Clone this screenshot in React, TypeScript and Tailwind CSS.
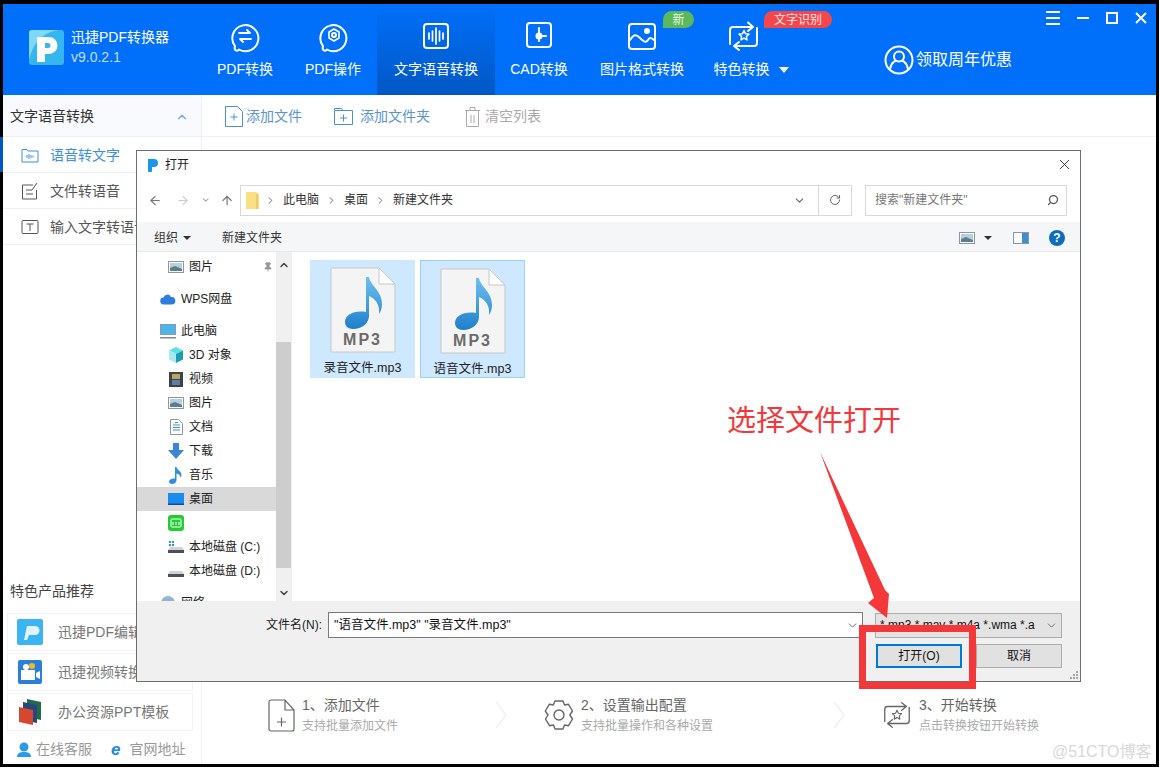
import type { ReactNode } from "react";
import { ChevronDown, ChevronRight, ChevronUp, ArrowLeft, ArrowRight, ArrowUp, RotateCw, Search, X, Pin } from "lucide-react";

const FONT = "font-['Liberation_Sans','Noto_Sans_CJK_SC',sans-serif]";

function Stroke({ size = 34, children, className = "" }: { size?: number; children: ReactNode; className?: string }) {
  return (
    <svg width={size} height={size} viewBox="0 0 34 34" fill="none" stroke="currentColor" strokeWidth="2" strokeLinecap="round" strokeLinejoin="round" className={className}>
      {children}
    </svg>
  );
}

const tabs: { label: ReactNode; width: string; active?: boolean; badge?: ReactNode; icon: ReactNode }[] = [
  {
    label: "PDF转换",
    width: "w-[88px]",
    icon: (
      <Stroke>
        <path d="M7 27a13 13 0 1 1 4 3.5c-1.5 2-5.5 1.5-4-3.5z" />
        <path d="M11 14h11l-3-3M23 20H12l3 3" strokeWidth="1.8" />
      </Stroke>
    ),
  },
  {
    label: "PDF操作",
    width: "w-[88px]",
    icon: (
      <Stroke>
        <path d="M7 27a13 13 0 1 1 4 3.5c-1.5 2-5.5 1.5-4-3.5z" />
        <circle cx="18" cy="16" r="2" />
        <path d="M18 10l5 3v6l-5 3-5-3v-6z" strokeWidth="1.6" />
      </Stroke>
    ),
  },
  {
    label: "文字语音转换",
    width: "w-[118px]",
    active: true,
    icon: (
      <Stroke>
        <rect x="5" y="5" width="24" height="24" rx="3" />
        <path d="M10 14v6M13.5 12v10M17 9v16M20.5 12v10M24 14v6" strokeWidth="1.7" />
      </Stroke>
    ),
  },
  {
    label: "CAD转换",
    width: "w-[88px]",
    icon: (
      <Stroke>
        <rect x="5" y="4" width="24" height="24" rx="3" />
        <path d="M17 9v13M17 17h7" />
        <circle cx="17" cy="17" r="2.500" fill="currentColor" />
      </Stroke>
    ),
  },
  {
    label: "图片格式转换",
    width: "w-[118px]",
    badge: <span className="absolute left-[80px] top-[7px] flex h-[17px] w-[31px] items-center justify-center rounded-tl-[9px] rounded-tr-[9px] rounded-br-[9px] bg-[#5cb85c] text-[12px] leading-none text-[#e8f5e0]">新</span>,
    icon: (
      <Stroke>
        <rect x="4" y="5" width="26" height="25" rx="3" />
        <circle cx="22" cy="12" r="2" fill="currentColor" />
        <path d="M5 21c4-6 6-6 10-2s6 5 8 2 4-2 6 0" />
      </Stroke>
    ),
  },
  {
    label: (
      <span className="flex items-center gap-[9px]">
        特色转换
        <span className="mt-[2px] h-0 w-0 border-x-[5px] border-t-[6px] border-x-transparent border-t-white" />
      </span>
    ),
    width: "w-[100px]",
    badge: <span className="absolute left-[63px] top-[7px] flex h-[17px] w-[68px] items-center justify-center rounded-tl-[9px] rounded-tr-[9px] rounded-br-[9px] bg-[#f5474b] text-[12px] leading-none text-[#fde5e5]">文字识别</span>,
    icon: (
      <Stroke className="-translate-x-[7px]">
        <path d="M3 25V11q0-3 3-3h19M21 3.500 26 8l-5 4" />
        <path d="M30 9v15q0 3-3 3H8M12 23l-5 4 5 4" />
        <path d="M17 11.500l1.500 3.200 3.400.4-2.500 2.400.6 3.400-3-1.700-3 1.700.6-3.400-2.500-2.400 3.400-.4z" strokeWidth="1.500" />
      </Stroke>
    ),
  },
];

const sideItems = [
  {
    label: "语音转文字",
    active: true,
    icon: (
      <svg width="18" height="16" viewBox="0 0 18 16" fill="none" stroke="currentColor">
        <path d="M1 2.500h5l1 1.500h10v11H1z" />
        <path d="M6 8v3M8 7v5M10 8v3M12 8.500v2" />
      </svg>
    ),
  },
  {
    label: "文件转语音",
    icon: (
      <svg width="18" height="18" viewBox="0 0 18 18" fill="none" stroke="currentColor">
        <path d="M12 3H1.500v14h14V8" />
        <path d="M5 8h6M5 12h7M11 8l5-7" />
      </svg>
    ),
  },
  {
    label: "输入文字转语音",
    icon: (
      <svg width="18" height="16" viewBox="0 0 18 16" fill="none" stroke="currentColor">
        <rect x="1" y="1.500" width="16" height="13" rx="1" />
        <path d="M5.500 5h7M9 5v7" />
      </svg>
    ),
  },
];

function Picture() {
  return (
    <svg width="16" height="12" viewBox="0 0 16 12">
      <rect x=".5" y=".5" width="15" height="11" fill="#fff" stroke="#8a97a5" />
      <rect x="2" y="2" width="12" height="8" fill="#b8cfe0" />
      <path d="M2 7l5-2 7 3v2H2z" fill="#5e7c8c" />
    </svg>
  );
}

function Drive({ system }: { system?: boolean }) {
  return (
    <svg width="16" height="14" viewBox="0 0 16 14">
      {system && <path d="M1 1h2v2H1zM4 1h2v2H4zM1 4h2v2H1zM4 4h2v2H4z" fill="#1f9ad8" />}
      <path d="M2 7h12l2 3v3H0v-3z" fill="#cfd3d6" />
      <rect y="10" width="16" height="3" fill="#4b5053" />
    </svg>
  );
}

const navItems: { label: string; indent: boolean; top: string; icon: ReactNode; selected?: boolean; pin?: boolean }[] = [
  { label: "图片", indent: true, top: "h-[24px]", icon: <Picture />, pin: true },
  {
    label: "WPS网盘",
    indent: false,
    top: "h-[24px] mt-[8px]",
    icon: (
      <svg width="16" height="12" viewBox="0 0 16 12">
        <path d="M4 11.500a3.500 3.500 0 0 1-.5-7A4 4 0 0 1 11 4a3.500 3.500 0 0 1 1 7.500z" fill="#2a7de1" />
      </svg>
    ),
  },
  {
    label: "此电脑",
    indent: false,
    top: "h-[24px] mt-[8px]",
    icon: (
      <svg width="16" height="15" viewBox="0 0 16 15">
        <rect x=".5" y=".5" width="15" height="10" fill="#4cb5ee" stroke="#8a9aa8" />
        <rect x="0" y="13" width="16" height="1.500" fill="#7d8b97" />
      </svg>
    ),
  },
  {
    label: "3D 对象",
    indent: true,
    top: "h-[24px]",
    icon: (
      <svg width="16" height="16" viewBox="0 0 16 16">
        <path d="M8 0l7 3.500L8 7 1 3.500z" fill="#5fe0e6" />
        <path d="M1 3.500L8 7v9l-7-3.500z" fill="#a8e8ee" />
        <path d="M15 3.500L8 7v9l7-3.500z" fill="#1d9bb0" />
      </svg>
    ),
  },
  {
    label: "视频",
    indent: true,
    top: "h-[24px]",
    icon: (
      <svg width="14" height="15" viewBox="0 0 14 15">
        <rect width="14" height="15" fill="#3c4250" />
        <rect x="3" y="2" width="8" height="5" fill="#b8a85a" />
        <rect x="3" y="8" width="8" height="5" fill="#5c7fa8" />
      </svg>
    ),
  },
  { label: "图片", indent: true, top: "h-[24px]", icon: <Picture /> },
  {
    label: "文档",
    indent: true,
    top: "h-[24px]",
    icon: (
      <svg width="13" height="16" viewBox="0 0 13 16" fill="none">
        <path d="M.5.500h8l4 4v11H.5z" fill="#fff" stroke="#8a97a5" />
        <path d="M3 6h7M3 8.500h7M3 11h7M5 3.500h3" stroke="#3f8fc4" />
      </svg>
    ),
  },
  {
    label: "下载",
    indent: true,
    top: "h-[24px]",
    icon: (
      <svg width="16" height="16" viewBox="0 0 16 16">
        <path d="M5 0h6v7h5l-8 9-8-9h5z" fill="#3a86d4" />
      </svg>
    ),
  },
  {
    label: "音乐",
    indent: true,
    top: "h-[24px]",
    icon: (
      <svg width="14" height="17" viewBox="0 0 14 17">
        <path d="M6 0h1.500c.5 3 5 4 5 8 0 1-.3 2-1 3 .3-3-2-4-4-4.500V13c0 2.500-2 4-4.500 4C1 17 0 16 0 14.500 0 12.500 3 11 6 11.500z" fill="#2f8fd8" />
      </svg>
    ),
  },
  {
    label: "桌面",
    indent: true,
    top: "h-[24px]",
    selected: true,
    icon: (
      <svg width="16" height="12" viewBox="0 0 16 12">
        <rect width="16" height="12" fill="#1a8cf0" />
        <rect y="10.500" width="16" height="1.500" fill="#0d4f96" />
      </svg>
    ),
  },
  {
    label: "",
    indent: true,
    top: "h-[24px]",
    icon: (
      <svg width="16" height="16" viewBox="0 0 16 16">
        <rect width="16" height="16" rx="3" fill="#22cc33" />
        <rect x="3" y="4" width="10" height="8" rx="1" fill="none" stroke="#fff" />
        <path d="M5 7v3M8 7v3M11 7v3" stroke="#fff" />
      </svg>
    ),
  },
  { label: "本地磁盘 (C:)", indent: true, top: "h-[24px]", icon: <Drive system /> },
  { label: "本地磁盘 (D:)", indent: true, top: "h-[24px]", icon: <Drive /> },
  {
    label: "网络",
    indent: false,
    top: "h-[24px] mt-[8px]",
    icon: (
      <svg width="16" height="16" viewBox="0 0 16 16">
        <circle cx="8" cy="8" r="7" fill="#8fb6d4" />
      </svg>
    ),
  },
];

function Mp3File({ name, outlined }: { name: string; outlined?: boolean }) {
  return (
    <div className={`flex h-[118px] w-[105px] flex-col items-center bg-[#cde8ff] pt-[7px] ${outlined ? "border border-[#99d1ff]" : ""}`}>
      <svg width="66" height="86" viewBox="0 0 66 86" className="shrink-0">
        <defs>
          <linearGradient id="note" x1="0" y1="0" x2="0" y2="1">
            <stop offset="0" stopColor="#6fc0ee" />
            <stop offset="1" stopColor="#1f7fcc" />
          </linearGradient>
        </defs>
        <path d="M1 1h48l16 16v68H1z" fill="#f4f4f4" stroke="#c8c8c8" />
        <path d="M49 1v16h16z" fill="#ffffff" stroke="#c8c8c8" />
        <path d="M36 10h3c1 8 13 14 13 27 0 4-1 7-3 10 1-9-3-15-10-18v20c0 7-7 13-16 13-6 0-8-4-8-7 0-7 9-12 21-10z" fill="url(#note)" />
      </svg>
      <span className="mt-[-22px] text-[16px] font-bold leading-[18px] tracking-[2px] text-[#6b6b6b]">MP3</span>
      <span className="mt-[11px] text-[12.5px] leading-[16px] text-[#222]">{name}</span>
    </div>
  );
}

function Step({ icon, title, sub, width, iconWidth, next }: { icon: ReactNode; title: string; sub: string; width: string; iconWidth: string; next?: boolean }) {
  return (
    <div className={`flex items-center ${width}`}>
      <div className={`flex text-[#666] ${iconWidth}`}>{icon}</div>
      <div className="ml-[5px]">
        <div className="text-[14px] leading-[18px] text-[#666]">{title}</div>
        <div className="mt-[4px] text-[12px] leading-[16px] text-[#aaa]">{sub}</div>
      </div>
      {next && (
        <svg width="12" height="28" viewBox="0 0 12 28" fill="none" stroke="#f0f0f0" strokeWidth="1.500" className="ml-auto mr-[36px]">
          <path d="M1 1l10 13L1 27" />
        </svg>
      )}
    </div>
  );
}

function Dialog() {
  return (
    <div className="absolute left-[133px] top-[146px] flex h-[532px] w-[945px] flex-col border border-[#6d6d6d] bg-white text-[12px] text-[#333]">
      <div className="flex h-[27px] shrink-0 items-center pl-[10px] pr-[7px]">
        <svg width="12" height="14" viewBox="0 0 12 14">
          <path d="M1 1h6a4 4 0 0 1 0 8H5v3.500a1.500 1.500 0 0 1-4 0z" fill="#1a95e8" />
        </svg>
        <span className="ml-[6px] text-[#222]">打开</span>
        <X size={17} strokeWidth={1.2} className="ml-auto text-[#222]" />
      </div>
      <div className="flex h-[44px] shrink-0 items-center pl-[11px] pr-[13px]">
        <ArrowLeft size={15} className="text-[#777]" />
        <ArrowRight size={15} className="ml-[14px] text-[#ccc]" />
        <ChevronDown size={10} strokeWidth={3} className="ml-[11px] text-[#aaa]" />
        <ArrowUp size={15} className="ml-[9px] text-[#777]" />
        <div className="ml-[6px] flex h-[31px] w-[612px] shrink-0 items-center border border-[#d9d9d9] pl-[5px]">
          <svg width="13" height="17" viewBox="0 0 13 17">
            <path d="M0 0h10l3 2v15H0z" fill="#fbdf85" />
            <path d="M11 2v15" stroke="#e0b84f" />
          </svg>
          <ChevronRight size={11} className="ml-[6px] text-[#666]" />
          <span className="ml-[7px]">此电脑</span>
          <ChevronRight size={11} className="ml-[7px] text-[#666]" />
          <span className="ml-[7px]">桌面</span>
          <ChevronRight size={11} className="ml-[7px] text-[#666]" />
          <span className="ml-[7px]">新建文件夹</span>
          <ChevronDown size={13} className="ml-auto mr-[12px] text-[#666]" />
          <div className="flex h-full w-[33px] items-center justify-center border-l border-[#d9d9d9]">
            <RotateCw size={12} className="text-[#666]" />
          </div>
        </div>
        <div className="ml-[13px] flex h-[31px] w-[202px] shrink-0 items-center border border-[#d9d9d9] pl-[9px] pr-[7px] text-[#777]">
          搜索"新建文件夹"
          <Search size={12} strokeWidth={2.5} className="ml-auto -scale-x-100 text-[#555]" />
        </div>
      </div>
      <div className="flex h-[30px] shrink-0 items-center border-b border-[#e8e8e8] bg-[#f5f6f7] pl-[17px] pr-[15px] pt-[2px]">
        <span>组织</span>
        <span className="ml-[5px] h-0 w-0 border-x-[4px] border-t-[4px] border-x-transparent border-t-[#333]" />
        <span className="ml-[31px]">新建文件夹</span>
        <div className="ml-auto flex items-center">
          <Picture />
          <span className="ml-[9px] h-0 w-0 border-x-[4px] border-t-[4px] border-x-transparent border-t-[#333]" />
          <svg width="16" height="12" viewBox="0 0 16 12" className="ml-[21px]">
            <rect x=".5" y=".5" width="15" height="11" fill="#fff" stroke="#8a97a5" />
            <rect x="9" y="1" width="6" height="10" fill="#3f8fd0" />
          </svg>
          <span className="ml-[20px] flex h-[16px] w-[16px] items-center justify-center rounded-full bg-[#0f6cbd] text-[12px] font-bold leading-none text-white">?</span>
        </div>
      </div>
      <div className="flex min-h-0 flex-1">
        <div className="w-[139px] overflow-hidden pt-[3px]">
          {navItems.map((item, i) => (
            <div key={i} className={`flex shrink-0 items-center ${item.top} ${item.indent ? "pl-[31px]" : "pl-[23px]"} ${item.selected ? "bg-[#d9d9d9]" : ""}`}>
              <span className="flex w-[16px] justify-center">{item.icon}</span>
              <span className="ml-[5px] text-[#222]">{item.label}</span>
              {item.pin && <Pin size={10} fill="#999" className="ml-auto mr-[3px] text-[#999]" />}
            </div>
          ))}
        </div>
        <div className="flex w-[15px] flex-col items-center bg-[#f0f0f0]">
          <ChevronUp size={12} strokeWidth={3} className="mt-[7px] text-[#444]" />
          <div className="mt-[71px] h-[226px] w-full bg-[#cdcdcd]" />
          <ChevronDown size={12} strokeWidth={3} className="mb-[2px] mt-auto text-[#444]" />
        </div>
        <div className="flex flex-1 items-start gap-[5px] border-l border-[#f0f0f0] pl-[18px] pt-[8px]">
          <Mp3File name="录音文件.mp3" />
          <Mp3File name="语音文件.mp3" outlined />
        </div>
      </div>
      <div className="relative h-[80px] shrink-0 bg-[#f0f0f0] pr-[18px] pt-[11px]">
        <div className="flex h-[26px] items-center">
          <span className="ml-[129px] text-[#222]">文件名(N):</span>
          <div className="ml-[6px] flex h-[26px] w-[535px] shrink-0 items-center border border-[#7a7a7a] bg-white pl-[5px] pr-[3px] text-[12.5px] text-[#111]">
            "语音文件.mp3" "录音文件.mp3"
            <ChevronDown size={13} strokeWidth={1.5} className="ml-auto text-[#555]" />
          </div>
          <div className="ml-[12px] flex h-[25px] w-[187px] shrink-0 items-center whitespace-nowrap border border-[#adadad] bg-[#e3e3e3] pl-[4px] pr-[3px] text-[#111]">
            *.mp3 *.mav *.m4a *.wma *.a
            <ChevronDown size={13} strokeWidth={1.5} className="ml-auto text-[#555]" />
          </div>
        </div>
        <div className="mt-[6px] flex justify-end gap-[14px]">
          <button type="button" className="h-[24px] w-[86px] border-2 border-[#0078d7] bg-[#e1e1e1] text-[#111]">打开(O)</button>
          <button type="button" className="h-[24px] w-[86px] border border-[#adadad] bg-[#e1e1e1] text-[#111]">取消</button>
        </div>
        <svg width="10" height="10" viewBox="0 0 10 10" className="absolute bottom-[1px] right-[1px]" fill="#a8a8a8">
          <path d="M7 1h2v2H7zM4 4h2v2H4zM7 4h2v2H7zM1 7h2v2H1zM4 7h2v2H4zM7 7h2v2H7z" />
        </svg>
      </div>
    </div>
  );
}

function Annotations() {
  return (
    <>
      <span className="absolute left-[724px] top-[397px] whitespace-nowrap text-[29px] leading-[40px] text-[#f0393c]">选择文件打开</span>
      <svg width="80" height="180" viewBox="0 0 80 180" className="absolute left-[810px] top-[446px]">
        <path d="M7 2L72 140l4 4-2 24-19-15 6-5z" fill="#f4383a" />
      </svg>
      <div className="absolute left-[856px] top-[621px] h-[64px] w-[117px] border-[7px] border-[#f4383a]" />
      <span className="absolute left-[1049px] top-[737px] whitespace-nowrap text-[16px] leading-[22px] text-[#d8d8d8]">@51CTO博客</span>
    </>
  );
}

export default function App() {
  return (
    <div className={`relative flex h-[767px] w-[1159px] flex-col border-b-[3px] border-l-[3px] border-r-[3px] border-t-[4px] border-black bg-white ${FONT}`}>
      <header className="flex h-[91px] shrink-0 bg-[#0070fb] text-white">
        <div className="flex w-[198px] shrink-0 items-center pb-[9px] pl-[26px]">
          <svg width="35" height="35" viewBox="0 0 35 35" className="mt-[5px] shrink-0">
            <rect width="35" height="35" rx="3" fill="#35b6ee" />
            <path d="M0 30C4 12 14 2 30 0H3a3 3 0 0 0-3 3z" fill="#7fd8f5" />
            <path d="M8 7h12a8.500 8.500 0 0 1 0 17h-4v8h-8zM16 13v5h3a2.500 2.500 0 0 0 0-5z" fill="#fff" fillRule="evenodd" />
          </svg>
          <div className="ml-[7px] mt-[4px]">
            <div className="whitespace-nowrap text-[14px] leading-[20px]">迅捷PDF转换器</div>
            <div className="text-[14px] leading-[20px] text-[#c4dcfb]">v9.0.2.1</div>
          </div>
        </div>
        {tabs.map((tab, i) => (
          <div key={i} className={`relative flex h-full shrink-0 flex-col items-center pt-[15px] ${tab.width} ${tab.active ? "bg-gradient-to-b from-[#0070fb] to-[#0058c4]" : ""}`}>
            {tab.icon}
            <div className="mt-[6px] whitespace-nowrap text-[14px] leading-[20px]">{tab.label}</div>
            {tab.badge}
          </div>
        ))}
        <div className="relative flex flex-1 items-start pl-[83px] pt-[41px]">
          <svg width="30" height="30" viewBox="0 0 30 30" fill="none" stroke="#fff" strokeWidth="2" className="shrink-0">
            <circle cx="15" cy="15" r="13.500" />
            <circle cx="15" cy="11.500" r="5" />
            <path d="M6 24c1-6 5-8 6.500-8.500M24 24c-1-6-5-8-6.500-8.500" />
          </svg>
          <span className="ml-[2px] mt-[4px] whitespace-nowrap text-[16px] leading-[22px]">领取周年优惠</span>
          <div className="absolute right-[9px] top-[7px] flex items-center gap-[17px]">
            <svg width="14" height="14" viewBox="0 0 14 14" fill="none" stroke="#fff" strokeWidth="2"><path d="M0 1h14M0 7h14M0 13h14" /></svg>
            <svg width="12" height="14" viewBox="0 0 12 14" fill="none" stroke="#fff" strokeWidth="2"><path d="M0 7h12" /></svg>
            <svg width="12" height="12" viewBox="0 0 12 12" fill="none" stroke="#fff" strokeWidth="2"><rect x="1" y="1" width="10" height="10" /></svg>
            <svg width="12" height="12" viewBox="0 0 12 12" fill="none" stroke="#fff" strokeWidth="2"><path d="M1 1l10 10M11 1L1 11" /></svg>
          </div>
        </div>
      </header>

      <div className="flex min-h-0 flex-1">
        <aside className="flex w-[199px] shrink-0 flex-col border-r border-[#eef0f3]">
          <div className="flex h-[42px] shrink-0 items-center justify-between border-b border-[#eef0f3] bg-[#f8fafd] pl-[7px] pr-[12px] pt-[2px] text-[14px] text-[#333]">
            文字语音转换
            <ChevronUp size={14} className="text-[#6aa6e8]" />
          </div>
          {sideItems.map((item) => (
            <div key={item.label} className={`relative flex h-[36px] shrink-0 items-center border-b border-[#eef0f3] pl-[18px] pt-[1px] text-[14px] ${item.active ? "text-[#3d8fdc]" : "text-[#555]"}`}>
              {item.active && <span className="absolute -left-[3px] top-0 h-full w-[3px] bg-[#0058c4]" />}
              <span className="flex w-[18px] justify-center">{item.icon}</span>
              <span className="ml-[11px] whitespace-nowrap">{item.label}</span>
            </div>
          ))}
          <div className="mt-auto pl-[4px]">
            <div className="pl-[3px] text-[14px] leading-[20px] text-[#444]">特色产品推荐</div>
            <div className="mt-[12px] flex h-[38px] w-[186px] items-center border border-[#f2f2f2] pl-[9px] text-[14px] text-[#777]">
              <svg width="26" height="26" viewBox="0 0 26 26" className="shrink-0">
                <rect width="26" height="26" rx="2" fill="#3ab4f2" />
                <path d="M7 21L10 7h8a4 4 0 0 1 0 9h-6l-2 5z" fill="#fff" opacity=".85" />
              </svg>
              <span className="ml-[15px] whitespace-nowrap">迅捷PDF编辑器</span>
            </div>
            <div className="mt-[2px] flex h-[38px] w-[186px] items-center border border-[#f2f2f2] pl-[10px] text-[14px] text-[#777]">
              <svg width="24" height="24" viewBox="0 0 24 24" className="shrink-0">
                <rect width="24" height="24" rx="2" fill="#2b7fd8" />
                <rect x="3" y="10" width="14" height="10" fill="#fff" />
                <circle cx="8" cy="7" r="3" fill="#fff" />
                <circle cx="14" cy="6" r="3" fill="#f5b921" />
                <path d="M18 13l4-2v8l-4-2z" fill="#fff" />
              </svg>
              <span className="ml-[16px] whitespace-nowrap">迅捷视频转换器</span>
            </div>
            <div className="mt-[2px] flex h-[38px] w-[186px] items-center border border-[#f2f2f2] pl-[11px] text-[14px] text-[#777]">
              <svg width="22" height="26" viewBox="0 0 22 26" className="shrink-0">
                <path d="M8 0l14 3v18l-14-3z" fill="#1f6b4a" />
                <path d="M4 3l14 3v18L4 21z" fill="#27477e" />
                <path d="M0 8l14 3v15L0 23z" fill="#d5472f" />
              </svg>
              <span className="ml-[17px] whitespace-nowrap">办公资源PPT模板</span>
            </div>
            <div className="flex h-[33px] items-center pl-[10px] pt-[3px] text-[14px] text-[#999]">
              <svg width="14" height="15" viewBox="0 0 14 15" className="shrink-0">
                <circle cx="7" cy="5" r="4.500" fill="#2b9ae8" />
                <path d="M0 15c0-4 3-5 7-5s7 1 7 5z" fill="#2b9ae8" />
              </svg>
              <span className="ml-[5px]">在线客服</span>
              <span className="ml-[19px] text-[17px] font-bold italic leading-none text-[#1c8be0]">e</span>
              <span className="ml-[9px]">官网地址</span>
            </div>
          </div>
        </aside>

        <main className="flex min-w-0 flex-1 flex-col">
          <div className="flex h-[42px] shrink-0 items-center border-b border-[#eef0f3] pl-[23px] pt-[2px] text-[14px]">
            <svg width="18" height="21" viewBox="0 0 18 21" fill="none" stroke="#4a90d9" className="shrink-0">
              <path d="M.5.500h12l5 5v15H.5z" />
              <path d="M5.500 11h7M9 7.500v7" />
            </svg>
            <span className="ml-[3px] text-[#5b93cc]">添加文件</span>
            <svg width="19" height="17" viewBox="0 0 19 17" fill="none" stroke="#4a90d9" className="ml-[32px] shrink-0">
              <path d="M.5 2.500h18v14H.5zM.5 2V.500h7L9 2.500" />
              <path d="M6 10h7M9.500 6.500v7" />
            </svg>
            <span className="ml-[7px] text-[#5b93cc]">添加文件夹</span>
            <svg width="15" height="20" viewBox="0 0 15 20" fill="none" stroke="#aaa" className="ml-[35px] shrink-0">
              <path d="M0 3.500h15M5 3V.500h5V3M1.500 4v15.500h12V4M6 8v8M9 8v8" />
            </svg>
            <span className="ml-[5px] text-[#aaa]">清空列表</span>
          </div>
          <div className="flex-1" />
          <div className="flex h-[77px] shrink-0 items-start pl-[66px] pt-[9px]">
            <Step
              next
              width="w-[275px]"
              iconWidth="w-[29px]"
              title="1、添加文件"
              sub="支持批量添加文件"
              icon={
                <svg width="27" height="33" viewBox="0 0 27 33" fill="none" stroke="currentColor" strokeWidth="1.2">
                  <path d="M3 1h14l9 10v19a2 2 0 0 1-2 2H3a2 2 0 0 1-2-2V3a2 2 0 0 1 2-2zM17 1v10h9" />
                  <path d="M9 23h9M13.500 18.500v9" />
                </svg>
              }
            />
            <Step
              next
              width="w-[338px]"
              iconWidth="w-[33px]"
              title="2、设置输出配置"
              sub="支持批量操作和各种设置"
              icon={
                <svg width="32" height="32" viewBox="0 0 32 32" fill="none" stroke="currentColor" strokeWidth="1.4" strokeLinejoin="round">
                  <path d="M12 2h8l1.500 4 4-.7 4 6.700-2.700 4 2.700 4-4 6.700-4-.7-1.500 4h-8l-1.500-4-4 .7-4-6.700L5 16l-2.700-4 4-6.700 4 .7z" />
                  <circle cx="16" cy="16" r="5" />
                </svg>
              }
            />
            <Step
              width="w-[240px]"
              iconWidth="w-[33px]"
              title="3、开始转换"
              sub="点击转换按钮开始转换"
              icon={
                <Stroke size={32}>
                  <path d="M4 24V11q0-3 3-3h18M22 4l5 4-5 4" strokeWidth="1.4" />
                  <path d="M30 9v14q0 3-3 3H9M12 22l-5 4 5 4" strokeWidth="1.4" />
                  <path d="M17 12l1.500 3.200 3.400.4-2.500 2.400.6 3.400-3-1.700-3 1.700.6-3.400-2.500-2.400 3.400-.4z" strokeWidth="1.200" />
                </Stroke>
              }
            />
          </div>
        </main>
      </div>
      <Dialog />
      <Annotations />
    </div>
  );
}
